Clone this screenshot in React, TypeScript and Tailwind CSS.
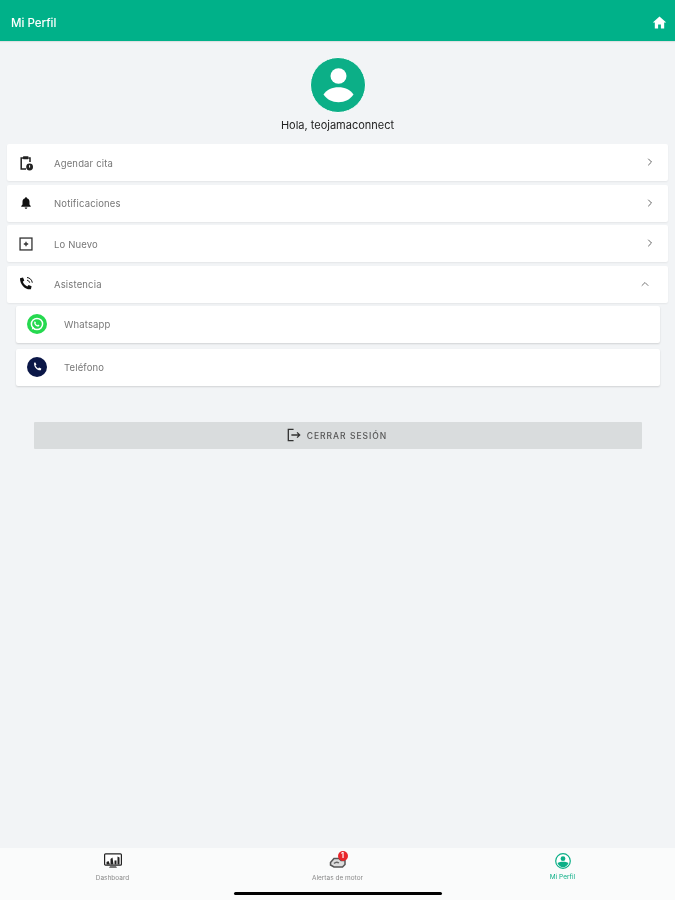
import { ChevronRight, ChevronUp } from "lucide-react";
import type { ReactNode } from "react";

const font = "font-['Inter','Liberation_Sans',sans-serif]";

function ClipboardIcon() {
  return (
    <svg viewBox="0 0 16 16" className="w-[16px] h-[16px]" fill="none">
      <path d="M10.500 3H12v4M5 3H3.200v11H8" stroke="#222" strokeWidth="1.500" />
      <rect x="5" y="1.200" width="5.500" height="3" rx="0.600" fill="#222" />
      <circle cx="11.600" cy="12" r="3.400" fill="#222" />
      <path d="M11.600 10.200v2.400" stroke="#fff" strokeWidth="1" />
    </svg>
  );
}
function BellIcon() {
  return (
    <svg viewBox="0 0 16 16" className="w-[14px] h-[14px]">
      <path d="M8 1.400c.7 0 1.100.5 1.100 1.100 1.900.5 2.900 2 2.900 4v3.200l1.400 1.600v.9H2.600v-.9L4 9.700V6.500c0-2 1-3.500 2.900-4C6.900 1.900 7.300 1.400 8 1.400zM6.500 13.200h3c0 .9-.7 1.500-1.500 1.500s-1.500-.6-1.500-1.500z" fill="#111" />
    </svg>
  );
}
function NewIcon() {
  return (
    <svg viewBox="0 0 16 16" className="w-[14px] h-[14px]" fill="none">
      <rect x="1.200" y="1.200" width="13.600" height="13.600" stroke="#333" strokeWidth="1.500" />
      <path d="M5.500 8h5M8 5.500v5" stroke="#333" strokeWidth="1.500" />
    </svg>
  );
}
function PhoneSupportIcon() {
  return (
    <svg viewBox="0 0 16 16" className="w-[16px] h-[16px]" fill="none">
      <path d="M2 2.200 5 1.500l1.300 3-1.500 1.200c.8 1.900 2.400 3.800 4.500 4.700l1.300-1.500 3 1.400-.7 3c-6 .6-11-5-10.900-11.100z" fill="#111" />
      <path d="M9 1.500c2.700.2 5 2.400 5.300 5.200M9 4.200c1.300.2 2.400 1.200 2.700 2.500" stroke="#111" strokeWidth="1" />
    </svg>
  );
}
function WhatsappIcon() {
  return (
    <svg viewBox="0 0 20 20" className="w-[20px] h-[20px]">
      <circle cx="10" cy="10" r="10" fill="#25D94F" />
      <circle cx="10" cy="10" r="5.600" fill="none" stroke="#fff" strokeWidth="1.500" />
      <path d="M4.700 15.500l1-3.300 2.200 2.300z" fill="#fff" />
      <path d="M8 7.300l1 1.500-.5.700c.4.800 1 1.300 1.900 1.700l.7-.6 1.400.9c-.3 1-1.300 1.200-2.200.9-1.600-.5-2.800-1.800-3.100-3.200-.1-.8.200-1.600.8-1.900z" fill="#fff" />
    </svg>
  );
}
function PhoneBadge() {
  return (
    <svg viewBox="0 0 20 20" className="w-[20px] h-[20px]">
      <circle cx="10" cy="10" r="10" fill="#0B1747" />
      <path d="M6.600 5.800 8.400 5.400l1 2.300-1 .9c.5 1.200 1.400 2.200 2.700 2.800l.9-1 2.300 1-.4 1.900c-3.900.4-7.200-3-6.800-7.500z" fill="#fff" />
    </svg>
  );
}
function HomeIcon() {
  return (
    <svg viewBox="0 0 16 16" className="w-[15px] h-[15px] mb-[4px]">
      <path d="M8 1.500 15.200 8H13v6.500H9.500V10h-3v4.500H3V8H.8z" fill="#fff" />
    </svg>
  );
}
function LogoutIcon() {
  return (
    <svg viewBox="0 0 16 16" className="w-[14px] h-[14px]" fill="none" stroke="#333" strokeWidth="1.500">
      <path d="M7.500 1.500H1.500v13h6" />
      <path d="M5 8h9.500M11.500 5l3 3-3 3" />
    </svg>
  );
}
function DashboardIcon() {
  return (
    <svg viewBox="0 0 18 16" className="w-[18px] h-[16px]">
      <rect x="0.600" y="0.800" width="16.800" height="11.400" rx="1" fill="#fff" stroke="#222" strokeWidth="1.200" />
      <path d="M2.500 11.500V9l2-1 1.500 3.500zM6.500 11.500V6l2-1.500 1 7zM10.500 11.500V7.500h2v4zM13.500 11.500V3.500l2 1v7z" fill="#222" />
      <path d="M6 13h6l1 2H5z" fill="#777" />
    </svg>
  );
}
function AlertsIcon() {
  return (
    <svg viewBox="0 0 18 14" className="w-[18px] h-[14px]" fill="none">
      <path d="M1.500 8.500 5 4.500h5l2 2h4v4l-2.500 2.500H5l-3.500-2z" fill="#ddd" stroke="#555" strokeWidth="1.500" />
      <path d="M5 9.500c1.500-1.500 3.500-1.500 5-.5" stroke="#666" strokeWidth="1.500" />
    </svg>
  );
}
function ProfileNavIcon() {
  return (
    <svg viewBox="0 0 16 16" className="w-[16px] h-[16px]">
      <circle cx="8" cy="8" r="7.300" fill="#fff" stroke="#0CAF87" strokeWidth="1.200" />
      <circle cx="8" cy="5.700" r="2.400" fill="#0CAF87" />
      <path d="M2.500 10c1.500-1 3.500-1.300 5.500-1.300s4 .3 5.500 1.300C12.500 12.600 10.500 14.300 8 14.300S3.500 12.600 2.500 10z" fill="#0CAF87" />
    </svg>
  );
}

function Row({ icon, label, open }: { icon: ReactNode; label: string; open?: boolean }) {
  return (
    <div className="h-[37px] bg-white rounded-[2px] shadow-[0_1px_2px_rgba(0,0,0,0.06)] flex items-center pl-[11px] pr-[12px]">
      <span className="w-[16px] flex justify-center">{icon}</span>
      <span className="ml-[20px] pt-[3px] text-[9.500px] tracking-[0.15px] text-[#777] flex-1">{label}</span>
      {open ? (
        <ChevronUp className="w-[12px] h-[12px] text-[#777] mr-[5px]" />
      ) : (
        <ChevronRight className="w-[12px] h-[12px] text-[#666] mb-[1px]" />
      )}
    </div>
  );
}

function SubRow({ icon, label }: { icon: ReactNode; label: string }) {
  return (
    <div className="h-[37px] bg-white rounded-[2px] shadow-[0_1px_2px_rgba(0,0,0,0.14)] flex items-center pl-[11px]">
      {icon}
      <span className="ml-[17px] pt-[3px] text-[9.500px] tracking-[0.15px] text-[#777]">{label}</span>
    </div>
  );
}

function NavItem({ icon, label, active }: { icon: ReactNode; label: string; active?: boolean }) {
  return (
    <div className="flex-1 flex flex-col items-center pt-[5px]">
      <div className="h-[16px] flex items-center justify-center relative">{icon}</div>
      <span className={`${active ? "mt-[4px] text-[#0CAF87]" : "mt-[5px] text-[#8a8a8a]"} text-[6.500px] leading-[9px]`}>{label}</span>
    </div>
  );
}

export default function App() {
  return (
    <div className={`${font} w-[675px] h-[900px] bg-[#F2F4F6] flex flex-col overflow-hidden blur-[0.4px]`}>
      <header className="h-[41px] bg-[#00B189] flex items-center justify-between pl-[11px] pr-[8px] shadow-[0_1px_1px_rgba(0,0,0,0.08)] pt-[7px]">
        <span className="text-white text-[11.500px] font-medium">Mi Perfil</span>
        <HomeIcon />
      </header>

      <main className="flex-1 flex flex-col">
        <div className="flex flex-col items-center pt-[16px]">
          <div className="w-[56px] h-[56px] rounded-full bg-[#0CAF87] border border-white flex items-center justify-center">
            <svg viewBox="0 0 40 40" className="w-[40px] h-[40px]">
              <ellipse cx="20.500" cy="11" rx="8" ry="7.800" fill="#fff" />
              <path d="M5.500 29.500C9 24.500 14 22.200 20.500 22.200S32 24.500 35.500 29.500C32 34.500 27 37.200 20.500 37.200S9 34.500 5.500 29.500z" fill="#fff" />
            </svg>
          </div>
          <p className="mt-[5px] text-[11px] leading-[14px] text-[#222]">Hola, teojamaconnect</p>
        </div>

        <div className="mt-[12px] mx-[7px] flex flex-col gap-[3.500px]">
          <Row icon={<ClipboardIcon />} label="Agendar cita" />
          <Row icon={<BellIcon />} label="Notificaciones" />
          <Row icon={<NewIcon />} label="Lo Nuevo" />
          <Row icon={<PhoneSupportIcon />} label="Asistencia" open />
        </div>
        <div className="mt-[3px] ml-[16px] mr-[15px] flex flex-col gap-[6px]">
          <SubRow icon={<WhatsappIcon />} label="Whatsapp" />
          <SubRow icon={<PhoneBadge />} label="Teléfono" />
        </div>

        <button className="mt-[36px] ml-[34px] mr-[33px] h-[27px] bg-[#D9DCDD] rounded-[1px] flex items-center justify-center gap-[6px] pr-[2px]">
          <LogoutIcon />
          <span className="pt-[2px] text-[8.500px] font-medium tracking-[1px] text-[#555]">CERRAR SESIÓN</span>
        </button>
      </main>

      <nav className="h-[52px] bg-[#FAFBFB] flex relative">
        <NavItem icon={<DashboardIcon />} label="Dashboard" />
        <NavItem
          icon={
            <>
              <AlertsIcon />
              <span className="absolute top-[-2px] right-[-1px] w-[10px] h-[10px] rounded-full bg-[#E8262B] text-white text-[7px] leading-[10px] text-center font-bold">1</span>
            </>
          }
          label="Alertas de motor"
        />
        <NavItem icon={<ProfileNavIcon />} label="Mi Perfil" active />
        <div className="absolute left-[234px] bottom-[5px] w-[208px] h-[3px] rounded-full bg-black" />
      </nav>
    </div>
  );
}
